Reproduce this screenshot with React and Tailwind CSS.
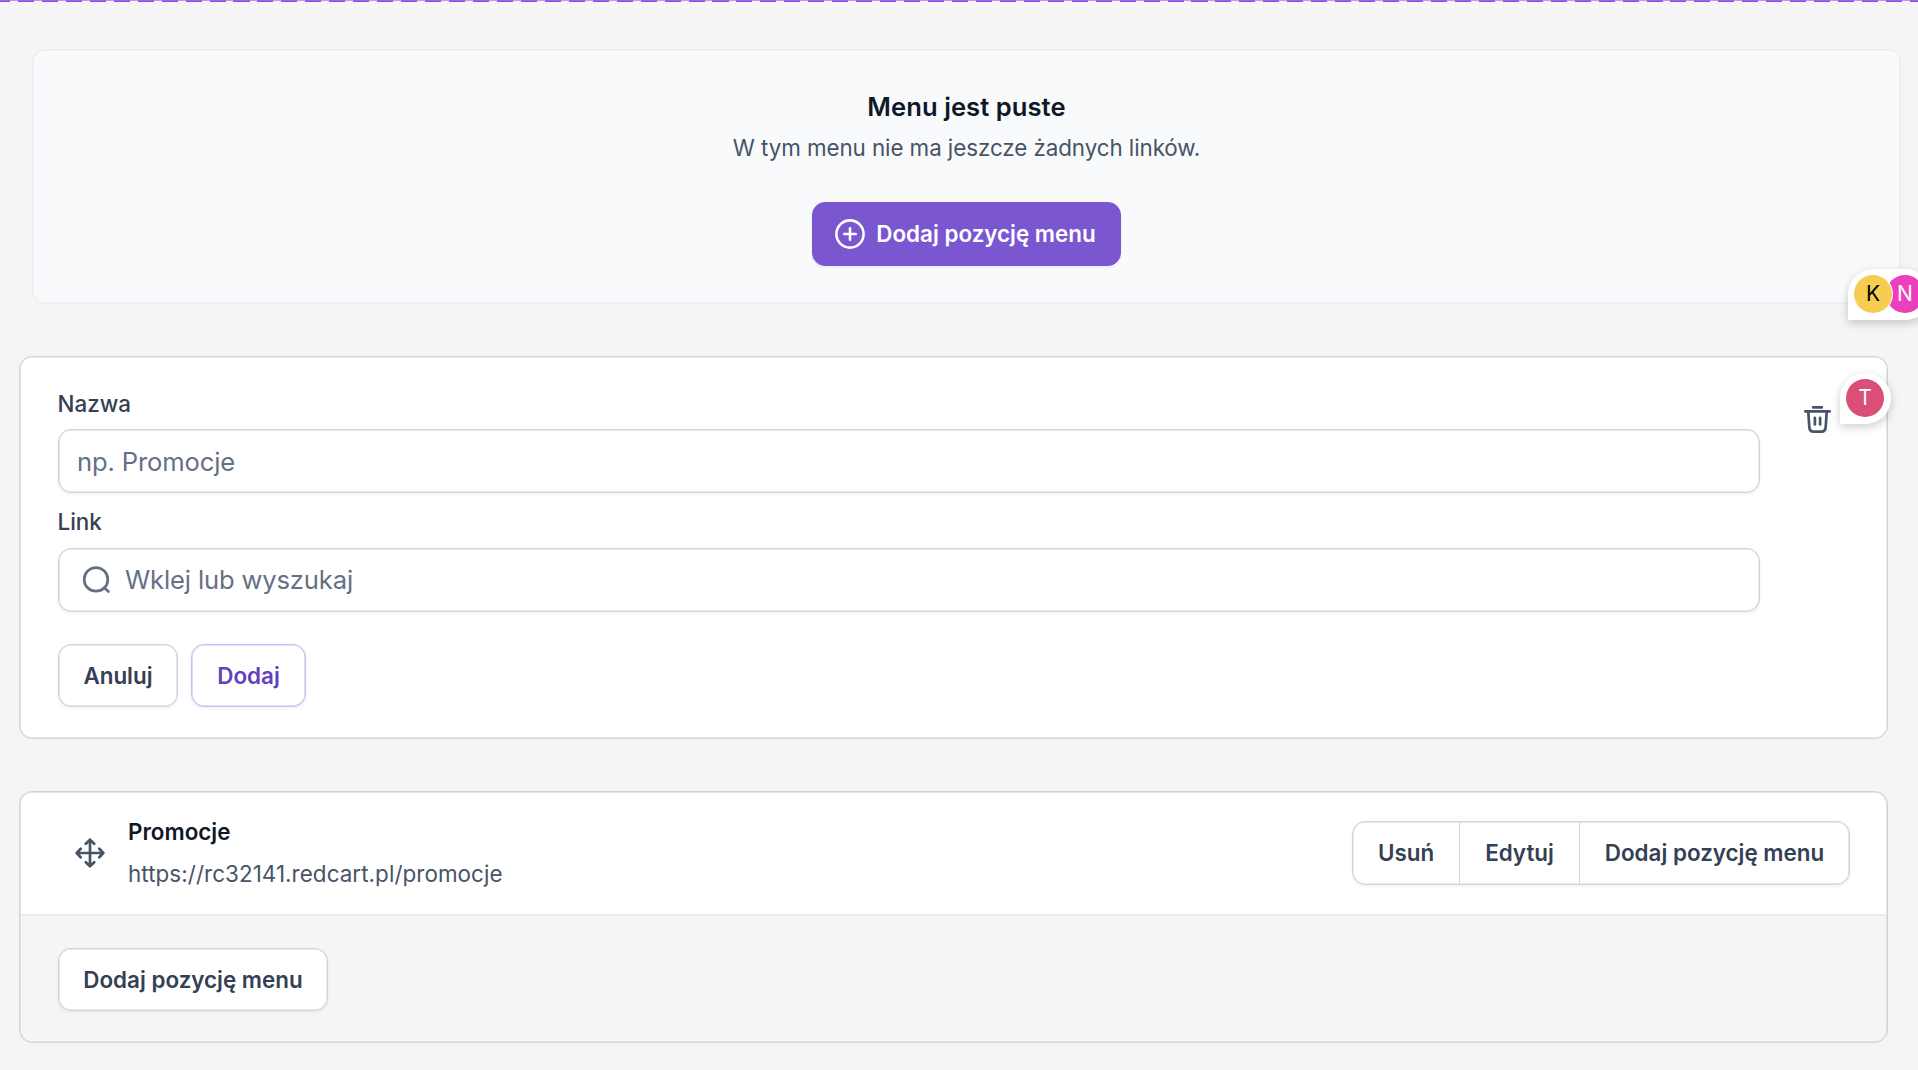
const card = "rounded-[13px] border border-[#d0d5dd] shadow-[inset_0_0_0_0.6px_#d0d5dd]";
const shadow = "shadow-[inset_0_0_0_0.6px_var(--edge),0_1.6px_3.2px_rgba(16,24,40,0.05)]";
const font = "font-['Inter',sans-serif]";

function Button({ children, className }) {
  return (
    <button className={`flex items-center justify-center whitespace-nowrap rounded-[13px] border text-[22.4px] font-semibold ${shadow} ${className}`}>
      {children}
    </button>
  );
}

function PlusCircle() {
  return (
    <svg width="32" height="32" viewBox="0 0 20 20" fill="none" stroke="currentColor" strokeWidth="1.6" strokeLinecap="round" strokeLinejoin="round">
      <circle cx="10" cy="10" r="8.5" />
      <path d="M10 6.4v7.2M6.4 10h7.2" />
    </svg>
  );
}

function SearchIcon() {
  return (
    <svg width="32" height="32" viewBox="0 0 32 32" fill="none" stroke="currentColor" strokeWidth="2.7" strokeLinecap="round">
      <circle cx="16" cy="15.4" r="11.8" />
      <path d="M24.3 23.7 28.4 27.6" />
    </svg>
  );
}

function TrashIcon() {
  return (
    <svg width="27" height="27" viewBox="0 0 27 27" fill="none" stroke="currentColor" strokeWidth="2.7" strokeLinecap="round" strokeLinejoin="round">
      <path d="M9.2 1.4h8.6M1.3 5.4h24.4M4.3 5.6 5.3 21.2q.3 4.5 4.4 4.5h7.6q4.1 0 4.4-4.5L22.7 5.6M10.9 11.8v6.6M16.1 11.8v6.6" />
    </svg>
  );
}

function MoveIcon() {
  return (
    <svg width="30" height="30" viewBox="0 0 30 30" fill="none" stroke="currentColor" strokeWidth="2.7" strokeLinecap="round" strokeLinejoin="round">
      <path d="M15 1.7v26.6M1.7 15h26.6M10.8 5.7 15 1.7l4.2 4M10.8 24.3l4.2 4 4.2-4M5.7 10.8 1.7 15l4 4.2M24.3 10.8l4 4.2-4 4.2" />
    </svg>
  );
}

const bubble = "absolute z-10 flex h-[51px] rounded-[25.5px] rounded-bl-none bg-white p-1.5 shadow-[0_3px_10px_rgba(0,0,0,0.2)]";
const avatar = "flex size-[38px] shrink-0 items-center justify-center rounded-full text-[21px]";
const neutral = "[--edge:#d0d5dd] border-[#d0d5dd] bg-white text-[#344054]";
const field = "flex h-[64px] items-center rounded-[13px] border border-[#d0d5dd] [--edge:#d0d5dd] text-[25.6px] tracking-[-0.15px] text-[#667085]";

export default function App() {
  return (
    <div className={`relative h-[1070px] w-[1918px] overflow-hidden bg-[#f5f5f5] ${font}`}>
      <div className="flex h-[2px] flex-col overflow-hidden">
        <div className="-ml-[6px] h-px shrink-0 bg-[repeating-linear-gradient(90deg,#9f62f2_0_16px,#bf97f3_16px_23.95px)]" />
        <div className="-ml-[6px] h-px shrink-0 bg-[repeating-linear-gradient(90deg,#8b4de0_0_16px,#f5f5f5_16px_23.95px)]" />
      </div>

      <section className="mt-[47px] ml-[32px] flex h-[255px] w-[1869px] flex-col items-center rounded-[13px] border border-[#eaecf0] bg-[#f9fafc] pt-[38px] shadow-[inset_0_0_0_0.6px_#eaecf0]">
        <h2 className="text-[25.6px] leading-[38px] font-semibold tracking-[0.05px] text-[#101828]">Menu jest puste</h2>
        <p className="mt-[6px] text-[22.4px] leading-[32px] tracking-[-0.08px] text-[#475467]">W tym menu nie ma jeszcze żadnych linków.</p>
        <Button className="mt-[38px] h-[64px] w-[309px] gap-[10px] border-[#7a57d1] bg-[#7a57d1] pr-[3px] text-white [--edge:#7a57d1]">
          <PlusCircle />
          Dodaj pozycję menu
        </Button>
      </section>

      <section className={`mt-[52px] ml-[19px] flex h-[383px] w-[1869px] justify-between bg-white pl-[38px] ${card}`}>
        <div className="w-[1702px] pt-[31px]">
          <label className="-ml-[0.5px] block text-[22.4px] leading-[32px] font-medium text-[#344054]">Nazwa</label>
          <div className={`mt-[9px] pl-[18px] ${field} ${shadow}`}><span className="pt-[2px]">np. Promocje</span></div>
          <label className="-ml-[0.5px] mt-[13px] block text-[22.4px] leading-[32px] font-medium text-[#344054]">Link</label>
          <div className={`mt-[10px] gap-[13px] pl-[21px] ${field} ${shadow}`}>
            <SearchIcon />
            Wklej lub wyszukaj
          </div>
          <div className="mt-8 flex gap-[13px]">
            <Button className={`h-[63px] w-[120px] ${neutral}`}>Anuluj</Button>
            <Button className="h-[63px] w-[115px] border-[#d0bcf7] bg-white text-[#6340c0] [--edge:#d0bcf7]">Dodaj</Button>
          </div>
        </div>
        <button className="mt-[49px] mr-[56px] size-[27px] text-[#475467]"><TrashIcon /></button>
      </section>

      <section className={`mt-[52px] ml-[19px] flex h-[252px] w-[1869px] flex-col overflow-hidden ${card}`}>
        <div className="m-px mb-0 flex h-[123px] items-center rounded-t-[11px] border-b-2 border-[#eaecf0] bg-white pr-[36px] pb-[2px] pl-[54px]">
          <span className="text-[#475467]"><MoveIcon /></span>
          <div className="ml-[23px]">
            <div className="text-[22.4px] leading-[32px] font-semibold text-[#101828]">Promocje</div>
            <div className="mt-[10px] text-[22.4px] leading-[32px] tracking-[0.07px] text-[#475467]">https://rc32141.redcart.pl/promocje</div>
          </div>
          <div className={`ml-auto flex h-[64px] divide-x-[1.5px] divide-[#d0d5dd] rounded-[13px] border border-[#d0d5dd] text-[22.4px] font-semibold text-[#344054] [--edge:#d0d5dd] ${shadow}`}>
            <button className="w-[107px]">Usuń</button>
            <button className="w-[120px]">Edytuj</button>
            <button className="w-[269px] whitespace-nowrap">Dodaj pozycję menu</button>
          </div>
        </div>
        <div className="flex-1 pt-[32px] pl-[38px]">
          <Button className={`h-[63px] w-[270px] ${neutral}`}>Dodaj pozycję menu</Button>
        </div>
      </section>

      <div className={`top-[269px] left-[1848px] w-[83px] ${bubble}`}>
        <span className={`relative z-10 bg-[#f6cd51] text-black ring-1 ring-white ${avatar}`}>K</span>
        <span className={`-ml-[6px] bg-[#ec3fbc] text-white ${avatar}`}>N</span>
      </div>
      <div className={`top-[373px] left-[1840px] w-[51px] ${bubble}`}>
        <span className={`bg-[#d94f78] text-white ${avatar}`}>T</span>
      </div>
    </div>
  );
}
